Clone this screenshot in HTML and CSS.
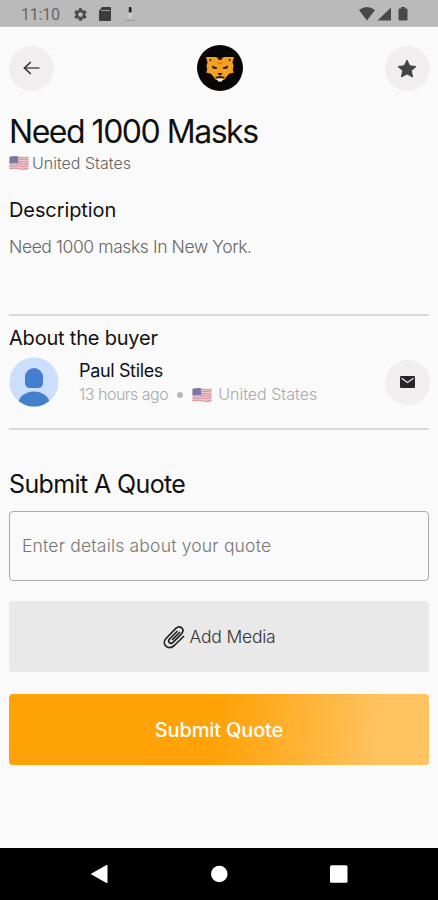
FILE: index.html
```html
<!DOCTYPE html>
<html lang="en">
<head>
<meta charset="utf-8">
<title>Need 1000 Masks</title>
<link rel="stylesheet" href="styles.css">
</head>
<body>
<svg width="0" height="0" class="defs" aria-hidden="true">
  <symbol id="flag" viewBox="0 0 19 14">
    <path fill="#eec9d0" d="M0 1Q5-.6 9.500 .6T19 .4V13Q14 14.300 9.500 13.300T0 13.500Z"/>
    <path stroke="#dd929d" stroke-width="1.100" fill="none" d="M0 1.500Q5 0 9.500 1.100T19 1M8 3.200Q14 4 19 3M8 5.400Q14 6.200 19 5.200M0 8Q5 6.600 9.500 7.600T19 7.400M0 10.400Q5 9 9.500 10T19 9.800M0 12.900Q5 11.500 9.500 12.700T19 12.400"/>
    <path fill="#7478a8" d="M0 1Q4-.3 8.500 .4V7Q4 6.500 0 7.300Z"/>
  </symbol>
</svg>
<div class="screen">
  <header class="status">
    <span class="clock">11:10</span>
    <svg class="gear" viewBox="0 0 24 24"><path fill="#484848" fill-rule="evenodd" d="M19.400 13a7.500 7.500 0 0 0 0-2l2.100-1.600c.2-.2.3-.4.100-.7l-2-3.400c-.1-.2-.4-.3-.6-.2l-2.500 1a7.300 7.300 0 0 0-1.700-1L14.400 2.400c0-.2-.2-.4-.5-.4h-4c-.2 0-.4.2-.5.400L9 5.100a8 8 0 0 0-1.700 1l-2.500-1c-.2-.1-.5 0-.6.2l-2 3.400c-.1.300 0 .5.200.7L4.500 11a8 8 0 0 0 0 2l-2.100 1.600c-.2.200-.3.400-.1.700l2 3.400c.1.200.4.300.6.200l2.500-1c.5.400 1.100.7 1.700 1l.4 2.700c0 .2.200.4.500.4h4c.2 0 .4-.2.500-.4l.4-2.700a7.300 7.300 0 0 0 1.700-1l2.500 1c.2.100.5 0 .6-.2l2-3.400c.1-.3 0-.5-.2-.7zM12 15.800a3.800 3.800 0 1 1 0-7.600 3.800 3.800 0 0 1 0 7.600z"/></svg>
    <svg class="card" viewBox="0 0 12 14"><path fill="#3c3c3c" d="M3 0h8q1 0 1 1v12q0 1-1 1H1q-1 0-1-1V4z"/><path stroke="#aaa" stroke-width=".9" d="M2 3.500h9"/></svg>
    <svg class="pin" viewBox="0 0 10 16"><rect x="3.800" y="1" width="2.700" height="5.500" rx="1" fill="#222"/><path stroke="#ddd" stroke-width="1.600" d="M5.100 7v5"/><path stroke="#999" d="M0 14.500h10"/></svg>
    <span class="spacer"></span>
    <svg class="signals" viewBox="0 0 50 14"><g fill="#484848"><path d="M0 3Q8-3 16 3L8 13.500Z"/><path d="M32 .5V13.500H18.500Z"/><path d="M42 1.500V0h4v1.500h1.500q1 0 1 1v10q0 1-1 1h-7q-1 0-1-1v-10q0-1 1-1z"/></g></svg>
  </header>
  <main>
    <nav class="topbar">
      <button class="round" aria-label="Back"><svg width="17" height="14" viewBox="0 0 17 14" fill="none" stroke="#444" stroke-width="1.700"><path stroke="#666" d="M2 7h14.500"/><path stroke="#333" d="M7.800 1 1.500 7l6.300 6"/></svg></button>
      <svg class="logo" viewBox="0 0 46 46"><circle cx="23" cy="23" r="23" fill="#080604"/><path fill="#f4a023" d="M9 12h10l2 1h4l2-1h10l-1.500 5.500 1 3-.8 4.500 1.300 2.500-5 1.300-3 3.700-2 2.500h-8l-2-2.500-3-3.700-5-1.300 1.300-2.500-.8-4.500 1-3z"/><path fill="#2b1803" d="m12 14 3 .8-2 1.700zm22 0-3 .8 2 1.700zM20.500 12.500h5l-1 2.500h-3zM15 20.500l5.500 2.300-1 1.200-4-.6zm16 0-5.500 2.300 1 1.200 4-.6zM20.500 28h5l-1.500 2.200h-2zm-2.500 4 5-1 5 1-1.500 1.500h-7z"/><path stroke="#a86310" stroke-width=".8" fill="none" d="M20.500 17.500 23 19l2.500-1.500M23 30v2"/><path fill="#eee" d="M20 33.500h6l-1 3h-4z"/></svg>
      <button class="round" aria-label="Favorite"><svg width="20" height="19" viewBox="0 0 20 19"><path fill="#444" stroke="#444" stroke-linejoin="round" d="m10 1 2.700 5.800 6.300.7-4.700 4.200 1.300 6.300L10 14.900 4.400 18l1.300-6.300L1 7.500l6.300-.7z"/></svg></button>
    </nav>
    <h1><span>Need 1000 Masks</span></h1>
    <div class="place"><svg class="flag"><use href="#flag"/></svg><span>United States</span></div>
    <h2 class="desc-title">Description</h2>
    <p class="desc">Need 1000 masks In New York.</p>
    <section class="buyer">
      <h2 class="about">About the buyer</h2>
      <div class="person">
        <svg class="avatar" viewBox="0 0 50 50"><clipPath id="face"><circle cx="25" cy="25" r="24.500"/></clipPath><g clip-path="url(#face)"><path fill="#cbdefb" d="M0 0h50v50H0z"/><path fill="#437fcd" d="M16 20a9 9 0 0 1 18 0v5q0 6-5 6h-8q-5 0-5-6z"/><ellipse cx="25" cy="47.500" rx="16" ry="13" fill="#437fcd"/></g></svg>
        <div class="info">
          <div class="name">Paul Stiles</div>
          <div class="meta"><span class="ago">13 hours ago</span><i class="dot"></i><svg class="flag"><use href="#flag"/></svg><span class="country">United States</span></div>
        </div>
        <button class="round" aria-label="Message"><svg width="15" height="12" viewBox="0 0 15 12"><rect width="15" height="12" rx="1.200" fill="#262529"/><path d="m1.500 2.300 6 4.200 6-4.200" fill="none" stroke="#e8e6e8" stroke-width="1.400"/></svg></button>
      </div>
    </section>
    <h2 class="quote-title">Submit A Quote</h2>
    <div class="field"><span>Enter details about your quote</span></div>
    <button class="media"><svg width="22" height="24" viewBox="0 0 22 24" fill="none" stroke="#222" stroke-width="1.700" stroke-linecap="round"><path d="M20.500 11.500 11.300 20.500C5 26-2 19 3 13.500L12.800 3.400c4.500-4 9.500 1 5.700 5.400L10 17.300c-2.800 2.500-5.800-.6-3.400-3.300L14 6.500"/><path d="m9.500 14.500 7-7"/></svg><span>Add Media</span></button>
    <button class="submit"><span>Submit Quote</span></button>
  </main>
  <footer class="android">
    <svg viewBox="0 0 438 52"><g fill="#fff"><path d="M91.500 25.500q-.8.500 0 1l15 8.500q1 .4 1-.7V17.700q0-1.100-1-.7z"/><circle cx="219.300" cy="26" r="8.300"/><rect x="330" y="17.300" width="17.500" height="17.500" rx="1.500"/></g></svg>
  </footer>
</div>
</body>
</html>
```

FILE: styles.css
```css
* { box-sizing: border-box; }
body { margin: 0; background: #fafafa; font-family: Inter, sans-serif; color: #111; }
.defs { position: absolute; }
.screen { width: 438px; height: 900px; display: flex; flex-direction: column; overflow: hidden; white-space: nowrap; }
.status { height: 27px; flex: none; background: #bababa; display: flex; align-items: center; padding: 2px 29px 0 21px; border-bottom: 1px solid #c8c8c8; }
.clock { width: 52px; font: 400 16px/20px Roboto, sans-serif; color: #666; letter-spacing: -.2px; padding-top: 1px; }
.gear { width: 15px; height: 15px; }
.card { width: 12px; height: 14px; margin-left: 11px; }
.pin { width: 10px; height: 16px; margin-left: 14px; }
.spacer { flex: 1; }
.signals { width: 50px; height: 14px; }
main { flex: 1; padding: 0 9px; display: flex; flex-direction: column; }
.topbar { height: 82px; display: flex; justify-content: space-between; align-items: center; flex: none; }
button { border: 0; padding: 0; font-family: inherit; }
.round { width: 45px; height: 45px; border-radius: 50%; background: #f0eeef; display: flex; align-items: center; justify-content: center; }
.round:last-child { margin-right: -.5px; }
.logo { width: 46px; height: 46px; margin-left: 1px; }
h1, h2, p { margin: 0; font-weight: 400; }
h1 { font-size: 32px; line-height: 44px; height: 44px; padding-top: 1px; letter-spacing: -1.480px; }
.place { display: flex; align-items: center; height: 20px; font-size: 16px; font-weight: 300; color: #666; gap: 3px; letter-spacing: 0; }
.flag { width: 20px; height: 14px; }
.desc-title, .about { font-size: 20px; line-height: 26px; letter-spacing: -.1px; }
.desc-title { margin-top: 24px; }
.about { letter-spacing: -.2px; margin-top: -1px; }
.desc { margin-top: 12px; font-size: 17.500px; line-height: 24px; font-weight: 300; color: #666; letter-spacing: -.4px; }
.buyer { margin-top: 55px; height: 116px; border-top: 2px solid #d8d8d8; border-bottom: 2px solid #d8d8d8; padding-top: 10px; }
.person { display: flex; align-items: center; height: 54px; margin-top: 4px; }
.avatar { width: 50px; height: 50px; }
.info { flex: 1; padding-left: 20px; }
.name { font-size: 18px; line-height: 24px; letter-spacing: -.35px; padding-top: 1px; }
.meta { display: flex; align-items: center; font-size: 16px; line-height: 23px; font-weight: 300; color: #aaa; }
.ago { letter-spacing: -.5px; }
.dot { width: 6px; height: 6px; border-radius: 50%; background: #b8b8b8; margin: 0 9px 0 9px; }
.country { margin-left: 6px; }
.quote-title { margin-top: 37px; font-size: 25px; line-height: 34px; letter-spacing: -.62px; }
.field { margin-top: 10px; height: 69.500px; border: 1px solid #aaa; border-radius: 4px; display: flex; align-items: center; padding: 0 0 1px 12px; font-size: 17.500px; font-weight: 300; color: #777; letter-spacing: .19px; flex: none; }
.media, .submit { height: 71px; border-radius: 4px; display: flex; align-items: center; justify-content: center; flex: none; }
.media { margin-top: 20px; background: #e9e9e9; color: #333; font-size: 17.500px; font-weight: 300; gap: 4px; letter-spacing: -.2px; padding: 1px 0 0 1px; }
.submit { margin-top: 22.500px; background: linear-gradient(95deg, #ffa208 0%, #ffa208 50%, #ffc360 88%, #ffc360 100%); color: #fff; font-size: 20px; font-weight: 500; letter-spacing: -.15px; }
.android { height: 52px; background: #000; flex: none; }
.android svg { display: block; width: 438px; height: 52px; }
```
